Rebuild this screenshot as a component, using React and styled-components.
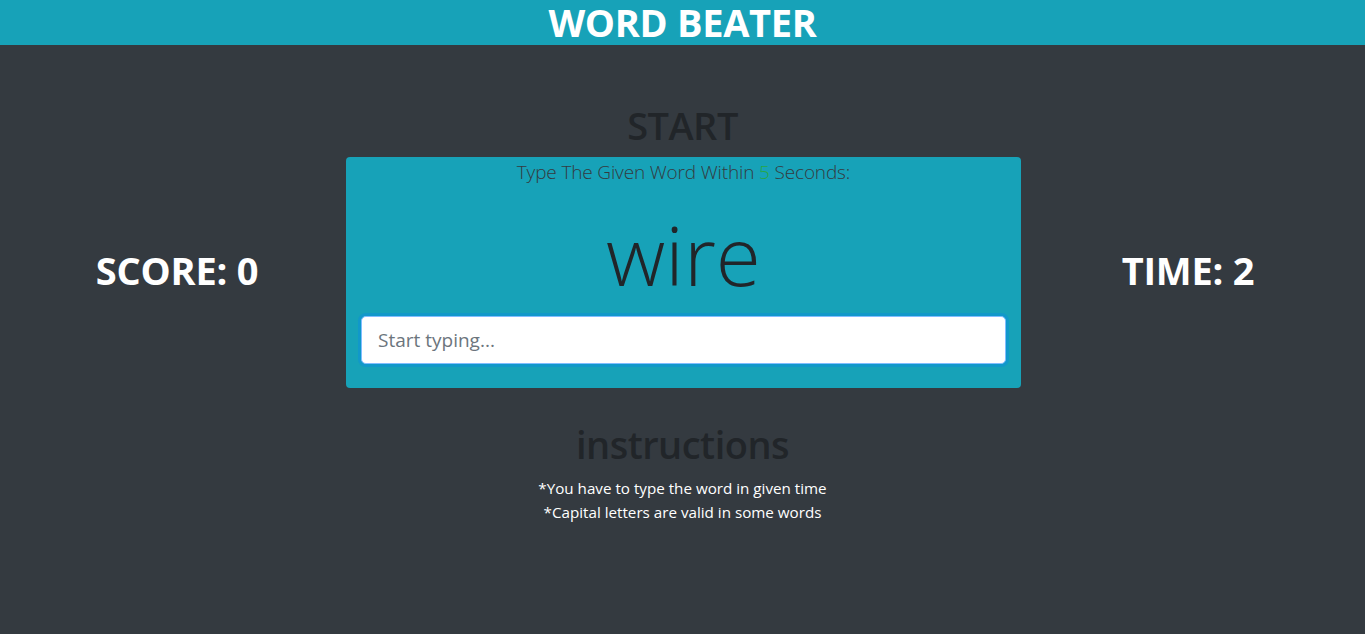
import styled, { createGlobalStyle } from 'styled-components'

const GlobalStyle = createGlobalStyle`
  html, body {
    margin: 0;
    padding: 0;
    background: #343a40;
    font-family: "Open Sans", "Noto Sans", sans-serif;
    color: #212529;
  }
  * { box-sizing: border-box; }
`

const Page = styled.div`
  min-height: 634px;
  background: #343a40;
`

const Header = styled.header`
  height: 45px;
  background: #17a2b8;
  display: flex;
  justify-content: center;
  align-items: center;
`

const Brand = styled.h1`
  margin: 0;
  color: #fff;
  font-size: 38px;
  font-weight: 700;
  line-height: 45px;
  letter-spacing: -0.3px;
`

const Heading = styled.h2`
  margin: 0 0 8px;
  text-align: center;
  font-size: 38px;
  font-weight: 600;
  line-height: 48px;
  color: #212529;
  letter-spacing: -0.5px;
`

const Main = styled.main`
  padding-top: 56px;
`

const GameRow = styled.div`
  display: grid;
  grid-template-columns: 346px 675px 1fr;
  align-items: center;
`

const Stat = styled.div`
  text-align: center;
  color: #fff;
  font-size: 38px;
  font-weight: 700;
  letter-spacing: -0.2px;
  padding-bottom: 6px;
  padding-left: ${p => (p.$side === 'left' ? '8px' : '0')};
  padding-right: ${p => (p.$side === 'right' ? '10px' : '0')};
`

const Card = styled.section`
  background: #17a2b8;
  border-radius: 4px;
  padding: 0 15px 24px;
  text-align: center;
`

const Lead = styled.p`
  margin: 0;
  font-size: 19px;
  font-weight: 300;
  line-height: 30px;
  color: #343a40;
  letter-spacing: -0.15px;
`

const Seconds = styled.span`
  color: #28a745;
`

const Word = styled.div`
  margin: 10px 0 4px;
  font-size: 82px;
  font-weight: 300;
  line-height: 115px;
  color: #212529;
`

const Input = styled.input`
  display: block;
  width: 100%;
  height: 48px;
  padding: 8px 16px;
  font-family: inherit;
  font-size: 19px;
  color: #495057;
  background: #fff;
  border: 1px solid #80bdff;
  border-radius: 4.8px;
  outline: 0;
  box-shadow: 0 0 0 3px rgba(0, 123, 255, 0.25);

  &::placeholder {
    color: #6c757d;
  }
`

const Instructions = styled.section`
  margin-top: 32px;
  text-align: center;
`

const Rule = styled.p`
  margin: 0;
  color: #fff;
  font-size: 15.2px;
  line-height: 24px;
`

const App = () => {
  return (
    <Page>
      <GlobalStyle />
      <Header>
        <Brand>WORD BEATER</Brand>
      </Header>
      <Main>
        <Heading>START</Heading>
        <GameRow>
          <Stat $side="left">SCORE: 0</Stat>
          <Card>
            <Lead>
              Type The Given Word Within <Seconds>5</Seconds> Seconds:
            </Lead>
            <Word>wire</Word>
            <Input type="text" placeholder="Start typing..." autoFocus />
          </Card>
          <Stat $side="right">TIME: 2</Stat>
        </GameRow>
        <Instructions>
          <Heading>instructions</Heading>
          <Rule>*You have to type the word in given time</Rule>
          <Rule>*Capital letters are valid in some words</Rule>
        </Instructions>
      </Main>
    </Page>
  )
}

export default App
